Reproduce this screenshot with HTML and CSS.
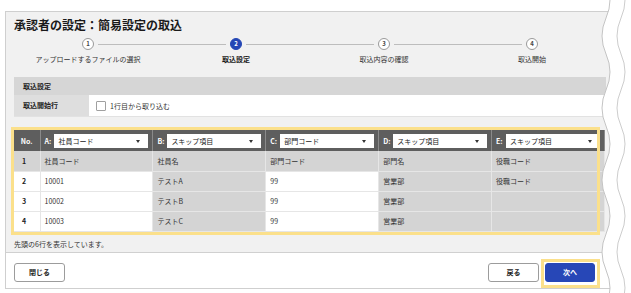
FILE: index.html
```html
<!DOCTYPE html>
<html lang="ja">
<head>
    <meta charset="UTF-8">
    <meta name="viewport" content="width=device-width, initial-scale=1.0">
    <title>承認者の設定：簡易設定の取込</title>
    <link rel="stylesheet" href="styles.css">
</head>
<body>

    <div class="dialog">
        <div class="dialog-body">
            <h1 class="title">承認者の設定：簡易設定の取込</h1>

            <!-- Wizard steps -->
            <ol class="steps">
                <li class="step">
                    <div class="step-mark"><span class="step-line"></span><span class="step-num">1</span><span class="step-line"></span></div>
                    <span class="step-label">アップロードするファイルの選択</span>
                </li>
                <li class="step current">
                    <div class="step-mark"><span class="step-line"></span><span class="step-num">2</span><span class="step-line"></span></div>
                    <span class="step-label">取込設定</span>
                </li>
                <li class="step">
                    <div class="step-mark"><span class="step-line"></span><span class="step-num">3</span><span class="step-line"></span></div>
                    <span class="step-label">取込内容の確認</span>
                </li>
                <li class="step">
                    <div class="step-mark"><span class="step-line"></span><span class="step-num">4</span><span class="step-line"></span></div>
                    <span class="step-label">取込開始</span>
                </li>
            </ol>

            <!-- Import settings -->
            <div class="settings">
                <div class="settings-head">取込設定</div>
                <div class="settings-row">
                    <div class="settings-label">取込開始行</div>
                    <label class="settings-value"><span class="checkbox"></span>1行目から取り込む</label>
                </div>
            </div>

            <!-- Preview table -->
            <div class="table-wrap">
                <table class="preview">
                    <colgroup>
                        <col class="col-no">
                        <col><col><col><col><col>
                    </colgroup>
                    <thead>
                        <tr>
                            <th class="no">No.</th>
                            <th><div class="col-head"><span class="col-key">A:</span><span class="select">社員コード<i class="caret"></i></span></div></th>
                            <th><div class="col-head"><span class="col-key">B:</span><span class="select">スキップ項目<i class="caret"></i></span></div></th>
                            <th><div class="col-head"><span class="col-key">C:</span><span class="select">部門コード<i class="caret"></i></span></div></th>
                            <th><div class="col-head"><span class="col-key">D:</span><span class="select">スキップ項目<i class="caret"></i></span></div></th>
                            <th><div class="col-head"><span class="col-key">E:</span><span class="select">スキップ項目<i class="caret"></i></span></div></th>
                        </tr>
                    </thead>
                    <tbody>
                        <tr class="field-row">
                            <td class="no">1</td>
                            <td>社員コード</td>
                            <td>社員名</td>
                            <td>部門コード</td>
                            <td>部門名</td>
                            <td>役職コード</td>
                        </tr>
                        <tr>
                            <td class="no">2</td>
                            <td>10001</td>
                            <td class="skip">テストA</td>
                            <td>99</td>
                            <td class="skip">営業部</td>
                            <td class="skip">役職コード</td>
                        </tr>
                        <tr>
                            <td class="no">3</td>
                            <td>10002</td>
                            <td class="skip">テストB</td>
                            <td>99</td>
                            <td class="skip">営業部</td>
                            <td class="skip"></td>
                        </tr>
                        <tr>
                            <td class="no">4</td>
                            <td>10003</td>
                            <td class="skip">テストC</td>
                            <td>99</td>
                            <td class="skip">営業部</td>
                            <td class="skip"></td>
                        </tr>
                    </tbody>
                </table>
                <div class="highlight table-hl"></div>
            </div>

            <p class="note">先頭の6行を表示しています。</p>
        </div>

        <div class="dialog-foot">
            <button class="btn">閉じる</button>
            <div class="foot-right">
                <button class="btn">戻る</button>
                <span class="next-wrap">
                    <button class="btn btn-primary">次へ</button>
                    <span class="highlight next-hl"></span>
                </span>
            </div>
        </div>
    </div>

    <!-- torn right edge -->
    <svg class="tear" width="31" height="293" viewBox="0 0 31 293">
        <path d="M6,-18 q8,18 0,36 t0,36 t0,36 t0,36 t0,36 t0,36 t0,36 t0,36 t0,36 L31,306 L31,-18 Z" fill="#fff"/>
        <path d="M6,-18 q8,18 0,36 t0,36 t0,36 t0,36 t0,36 t0,36 t0,36 t0,36 t0,36" fill="none" stroke="#c4c4c4" stroke-width="1"/>
        <path d="M21,-18 q8,18 0,36 t0,36 t0,36 t0,36 t0,36 t0,36 t0,36 t0,36 t0,36" fill="none" stroke="#cdcdcd" stroke-width="1"/>
    </svg>

</body>
</html>
```

FILE: styles.css
```css
* {
    box-sizing: border-box;
}
body {
    margin: 0;
    background: #fff;
    font-family: "Noto Sans CJK JP", "Noto Sans", sans-serif;
    font-size: 7px;
    color: #222;
}
.dialog {
    width: 610px;
    margin: 11px 0 0 5px;
    border: 1px solid #cfcfcf;
    background: #f1f1f1;
}
.dialog-body {
    padding: 5px 8px 3px;
}
.title {
    margin: 0;
    font-size: 12px;
    line-height: 16px;
    font-weight: bold;
    color: #1a1a1a;
}

/* steps */
.steps {
    list-style: none;
    margin: 5px 0 0;
    padding: 0;
    display: grid;
    grid-template-columns: repeat(4, 148px);
}
.step {
    display: flex;
    flex-direction: column;
}
.step-mark {
    display: flex;
    align-items: center;
    height: 12px;
}
.step-line {
    flex: 1;
    height: 1px;
    background: #bdbdbd;
}
.step:first-child .step-line:first-child,
.step:last-child .step-line:last-child {
    visibility: hidden;
}
.step-num {
    width: 12px;
    height: 12px;
    margin: 0 4px;
    border: 1px solid #9a9a9a;
    border-radius: 50%;
    background: #fff;
    font-size: 6px;
    line-height: 10px;
    text-align: center;
    font-weight: bold;
    color: #444;
}
.step-label {
    margin-top: 4px;
    line-height: 10px;
    text-align: center;
    color: #333;
}
.step.current .step-num {
    background: #2446b5;
    border-color: #2446b5;
    color: #fff;
}
.step.current .step-label {
    font-weight: bold;
    color: #1a1a1a;
}

/* settings */
.settings {
    margin-top: 13px;
}
.settings-head {
    height: 18px;
    line-height: 18px;
    padding-left: 9px;
    background: #d6d6d6;
    font-weight: bold;
}
.settings-row {
    display: flex;
    height: 22px;
    background: #fff;
    border-bottom: 1px solid #e2e2e2;
}
.settings-label {
    width: 75px;
    padding-left: 9px;
    line-height: 21px;
    background: #dedede;
    font-weight: bold;
}
.settings-value {
    display: flex;
    align-items: center;
    gap: 4px;
    padding-left: 7px;
    color: #333;
}
.checkbox {
    width: 10px;
    height: 10px;
    border: 1px solid #a0a0a0;
    border-radius: 1px;
    background: #fff;
}

/* preview table */
.table-wrap {
    position: relative;
    width: 591px;
    margin-top: 13px;
}
.preview {
    width: 591px;
    table-layout: fixed;
    border-collapse: collapse;
}
.col-no {
    width: 26px;
}
.preview th {
    height: 21px;
    padding: 0 4px;
    background: #5e5e5e;
    border-right: 1px solid #8a8a8a;
    color: #fff;
    font-weight: bold;
    text-align: left;
}
.preview th.no {
    text-align: center;
    padding: 0;
}
.col-head {
    display: flex;
    align-items: center;
    gap: 2px;
}
.col-key {
    width: 8px;
}
.select {
    position: relative;
    width: 94px;
    height: 14px;
    padding-left: 4px;
    line-height: 14px;
    background: #fff;
    color: #222;
    font-weight: normal;
}
.caret {
    position: absolute;
    right: 8px;
    top: 6px;
    border-left: 2px solid transparent;
    border-right: 2px solid transparent;
    border-top: 3px solid #333;
}
.preview td {
    height: 20px;
    padding: 0 4px;
    background: #fff;
    border-right: 1px solid #e6e6e6;
    border-bottom: 1px solid #e6e6e6;
    color: #333;
}
.preview td.no {
    padding-left: 8px;
    font-weight: bold;
    color: #222;
}
.preview .field-row td,
.preview td.skip {
    background: #d4d4d4;
}

/* annotation frames */
.highlight {
    position: absolute;
    border: 3px solid #fbe08b;
    pointer-events: none;
}
.table-hl {
    left: -3px;
    top: -3px;
    right: 5px;
    bottom: -3px;
}
.note {
    margin: 7px 0 0;
    line-height: 10px;
    color: #333;
}

/* footer */
.dialog-foot {
    display: flex;
    justify-content: space-between;
    padding: 10px 19px 6px 8px;
    border-top: 1px solid #d0d0d0;
    background: #fff;
}
.foot-right {
    display: flex;
    gap: 6px;
}
.btn {
    width: 51px;
    height: 19px;
    padding: 0;
    border: 1px solid #9c9c9c;
    border-radius: 3px;
    background: #fff;
    font-family: "Noto Sans CJK JP", "Noto Sans", sans-serif;
    font-size: 7px;
    font-weight: bold;
    color: #222;
}
.next-wrap {
    position: relative;
    display: flex;
}
.btn-primary {
    width: 50px;
    background: #2747b7;
    border-color: #2747b7;
    color: #fff;
}
.next-hl {
    left: -4px;
    top: -4px;
    right: -5px;
    bottom: -6px;
}
.tear {
    position: absolute;
    left: 600px;
    top: 0;
}
```
